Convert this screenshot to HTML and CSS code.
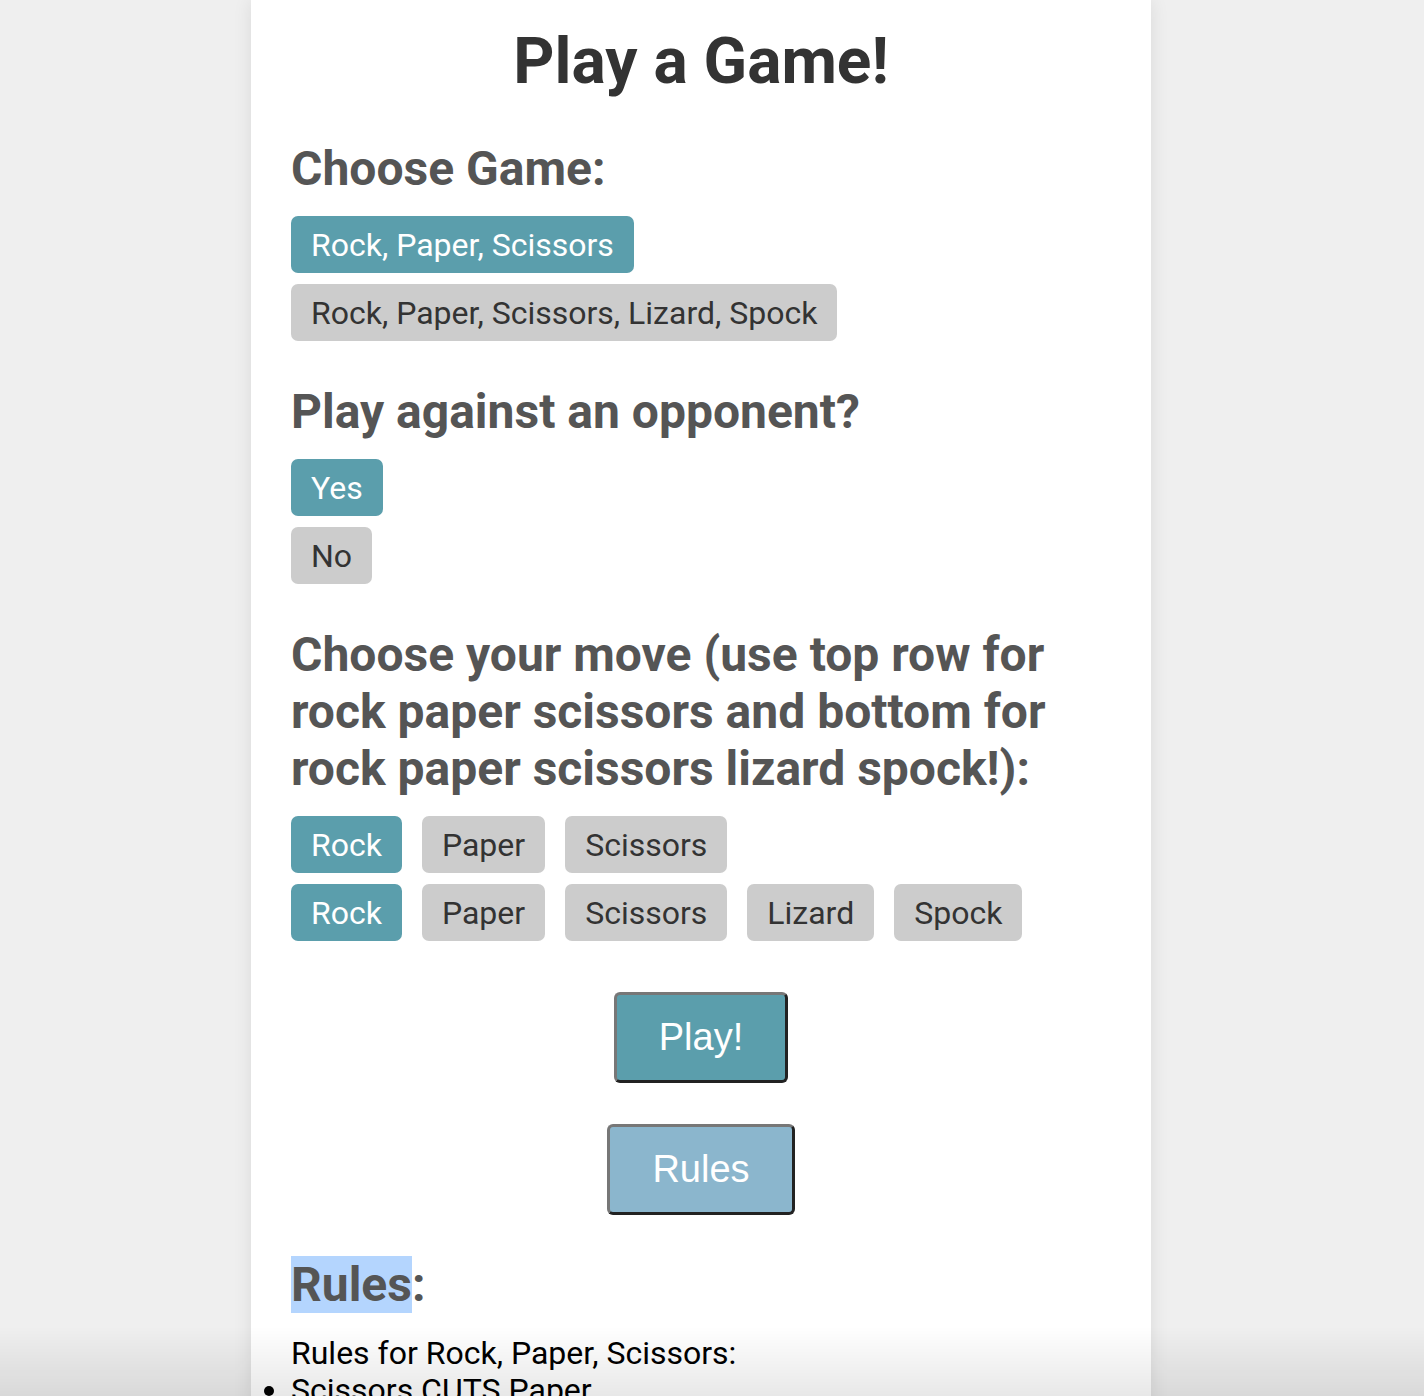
FILE: index.html
```html
<!DOCTYPE html>
<html lang="en">
<head>
<meta charset="utf-8">
<title>Play a Game!</title>
<link rel="stylesheet" href="styles.css">
</head>
<body>
<main class="page">
  <h1 class="title">Play a Game!</h1>

  <section class="block">
    <h2 class="heading">Choose Game:</h2>
    <div class="stack">
      <div><button class="opt opt-on">Rock, Paper, Scissors</button></div>
      <div><button class="opt">Rock, Paper, Scissors, Lizard, Spock</button></div>
    </div>
  </section>

  <section class="block">
    <h2 class="heading">Play against an opponent?</h2>
    <div class="stack">
      <div><button class="opt opt-on">Yes</button></div>
      <div><button class="opt">No</button></div>
    </div>
  </section>

  <section class="block">
    <h2 class="heading">Choose your move (use top row for rock paper scissors and bottom for rock paper scissors lizard spock!):</h2>
    <div class="stack">
      <div class="row">
        <button class="opt opt-on">Rock</button>
        <button class="opt">Paper</button>
        <button class="opt">Scissors</button>
      </div>
      <div class="row">
        <button class="opt opt-on">Rock</button>
        <button class="opt">Paper</button>
        <button class="opt">Scissors</button>
        <button class="opt">Lizard</button>
        <button class="opt">Spock</button>
      </div>
    </div>
  </section>

  <div class="actions">
    <button class="big big-play">Play!</button>
    <button class="big big-rules">Rules</button>
  </div>

  <section class="rules">
    <h2 class="heading"><span class="sel">Rules</span>:</h2>
    <p class="rules-intro">Rules for Rock, Paper, Scissors:</p>
    <ul class="rules-list">
      <li>Scissors CUTS Paper</li>
      <li>Paper COVERS Rock</li>
      <li>Rock CRUSHES Scissors</li>
    </ul>
  </section>
</main>
<div class="fade"></div>
</body>
</html>
```

FILE: styles.css
```css
html, body {
  margin: 0;
  padding: 0;
}
body {
  background: #efefef;
  font-family: Roboto, "Liberation Sans", Arial, sans-serif;
  padding-right: 22px;
}
.page {
  width: 900px;
  margin: 0 auto;
  background: #ffffff;
  box-shadow: 0 0 18px rgba(0, 0, 0, 0.09);
  padding: 24px 40px 60px;
  box-sizing: border-box;
  min-height: 1500px;
}
.title {
  margin: 0;
  text-align: center;
  font-size: 64px;
  font-weight: 700;
  color: #333333;
  line-height: 75px;
}
.block {
  margin-top: 41px;
}
.block + .block {
  margin-top: 42px;
}
.heading {
  margin: 0 0 19px;
  font-size: 48px;
  font-weight: 700;
  line-height: 57px;
  color: #555555;
}
.stack {
  display: flex;
  flex-direction: column;
  gap: 11px;
}
.row {
  display: flex;
  gap: 20px;
}
.opt {
  font-family: Roboto, "Liberation Sans", Arial, sans-serif;
  font-size: 32px;
  line-height: 37px;
  padding: 11px 20px 9px;
  border: none;
  border-radius: 7px;
  background: #cccccc;
  color: #333333;
  cursor: pointer;
}
.opt-on {
  background: #5b9eac;
  color: #ffffff;
}
.actions {
  margin-top: 51px;
  display: flex;
  flex-direction: column;
  align-items: center;
  gap: 41px;
}
.big {
  font-family: "Liberation Sans", Arial, sans-serif;
  font-size: 38px;
  line-height: 45px;
  padding: 20px 42px;
  color: #ffffff;
  border: 3px solid;
  border-color: #777777 #222222 #222222 #777777;
  border-radius: 6px;
  cursor: pointer;
}
.big-play {
  background: #5b9eac;
}
.big-rules {
  background: #8bb6cd;
}
.rules {
  margin-top: 41px;
}
.rules .heading {
  margin-bottom: 22px;
}
.sel {
  background: #b4d5fe;
}
.rules-intro {
  margin: 0;
  font-size: 32px;
  line-height: 37px;
  color: #000000;
}
.rules-list {
  margin: 0;
  padding: 0;
  font-size: 32px;
  line-height: 37px;
  color: #000000;
}
.fade {
  position: fixed;
  left: 0;
  right: 0;
  bottom: 0;
  height: 70px;
  background: linear-gradient(to bottom, rgba(0, 0, 0, 0), rgba(0, 0, 0, 0.09));
  pointer-events: none;
}
```
